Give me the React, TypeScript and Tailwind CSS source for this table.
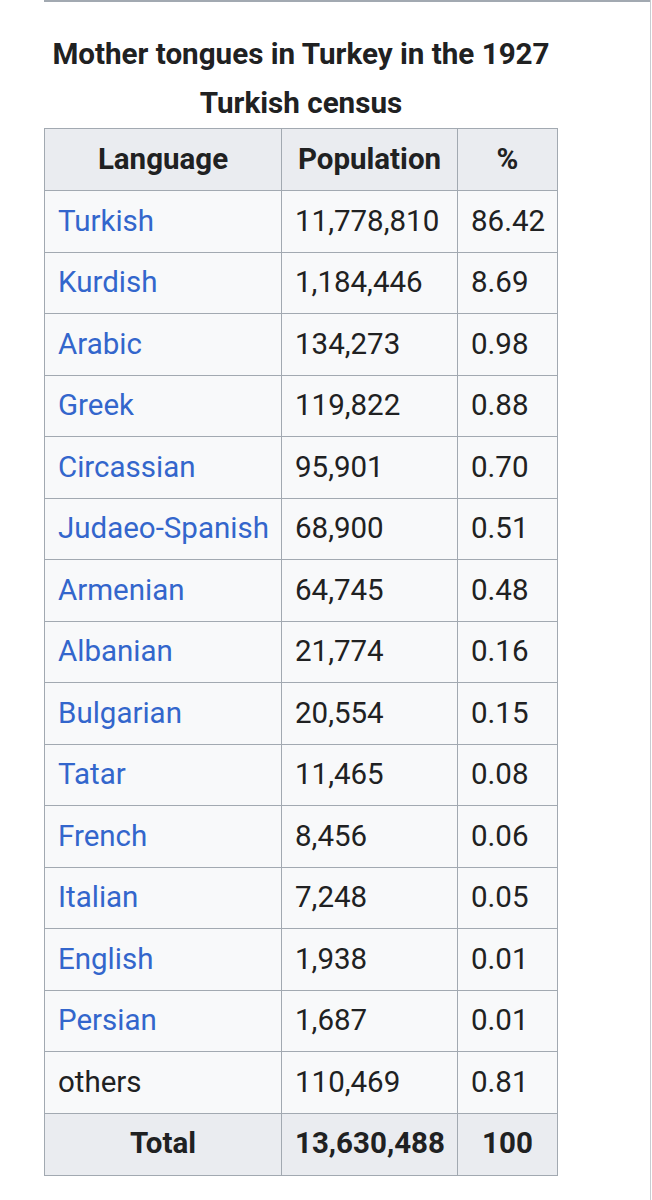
const rows: [string, string, string, boolean][] = [
  ['Turkish', '11,778,810', '86.42', true],
  ['Kurdish', '1,184,446', '8.69', true],
  ['Arabic', '134,273', '0.98', true],
  ['Greek', '119,822', '0.88', true],
  ['Circassian', '95,901', '0.70', true],
  ['Judaeo-Spanish', '68,900', '0.51', true],
  ['Armenian', '64,745', '0.48', true],
  ['Albanian', '21,774', '0.16', true],
  ['Bulgarian', '20,554', '0.15', true],
  ['Tatar', '11,465', '0.08', true],
  ['French', '8,456', '0.06', true],
  ['Italian', '7,248', '0.05', true],
  ['English', '1,938', '0.01', true],
  ['Persian', '1,687', '0.01', true],
  ['others', '110,469', '0.81', false],
];

export default function App() {
  return (
    <div className="w-[652px] h-[1200px] bg-white font-['Roboto',sans-serif] text-[#202122] overflow-hidden">
      <div className="w-[651px] h-full border-r border-[#c8ccd1]">
        {/* bottom edge of the box above */}
        <div className="ml-[44px] h-[2px] bg-[#a2a9b1]" />

        <table className="mt-[28px] ml-[44px] w-[513px] table-fixed border-collapse text-[29.5px] leading-none">
          <caption className="font-bold text-[29.6px] leading-[49px] text-center whitespace-nowrap">
            Mother tongues in Turkey in the 1927
            <br />
            Turkish census
          </caption>
          <thead>
            <tr className="h-[62px] bg-[#eaecf0]">
              <th className="w-[237px] border border-[#a2a9b1] px-[13px] font-bold text-center">Language</th>
              <th className="w-[176px] border border-[#a2a9b1] px-[13px] font-bold text-center">Population</th>
              <th className="w-[100px] border border-[#a2a9b1] px-[13px] font-bold text-center">%</th>
            </tr>
          </thead>
          <tbody>
            {rows.map(([lang, pop, pct, link]) => (
              <tr key={lang} className="h-[61.5px] bg-[#f8f9fa]">
                <td className={`border border-[#a2a9b1] px-[13px] whitespace-nowrap ${link ? 'text-[#3366cc]' : ''}`}>{lang}</td>
                <td className="border border-[#a2a9b1] px-[13px] whitespace-nowrap">{pop}</td>
                <td className="border border-[#a2a9b1] px-[13px] whitespace-nowrap">{pct}</td>
              </tr>
            ))}
            <tr className="h-[62px] bg-[#eaecf0]">
              <th className="border border-[#a2a9b1] px-[13px] font-bold text-center">Total</th>
              <th className="border border-[#a2a9b1] px-[13px] font-bold text-center whitespace-nowrap">13,630,488</th>
              <th className="border border-[#a2a9b1] px-[13px] font-bold text-center">100</th>
            </tr>
          </tbody>
        </table>
      </div>
    </div>
  );
}
